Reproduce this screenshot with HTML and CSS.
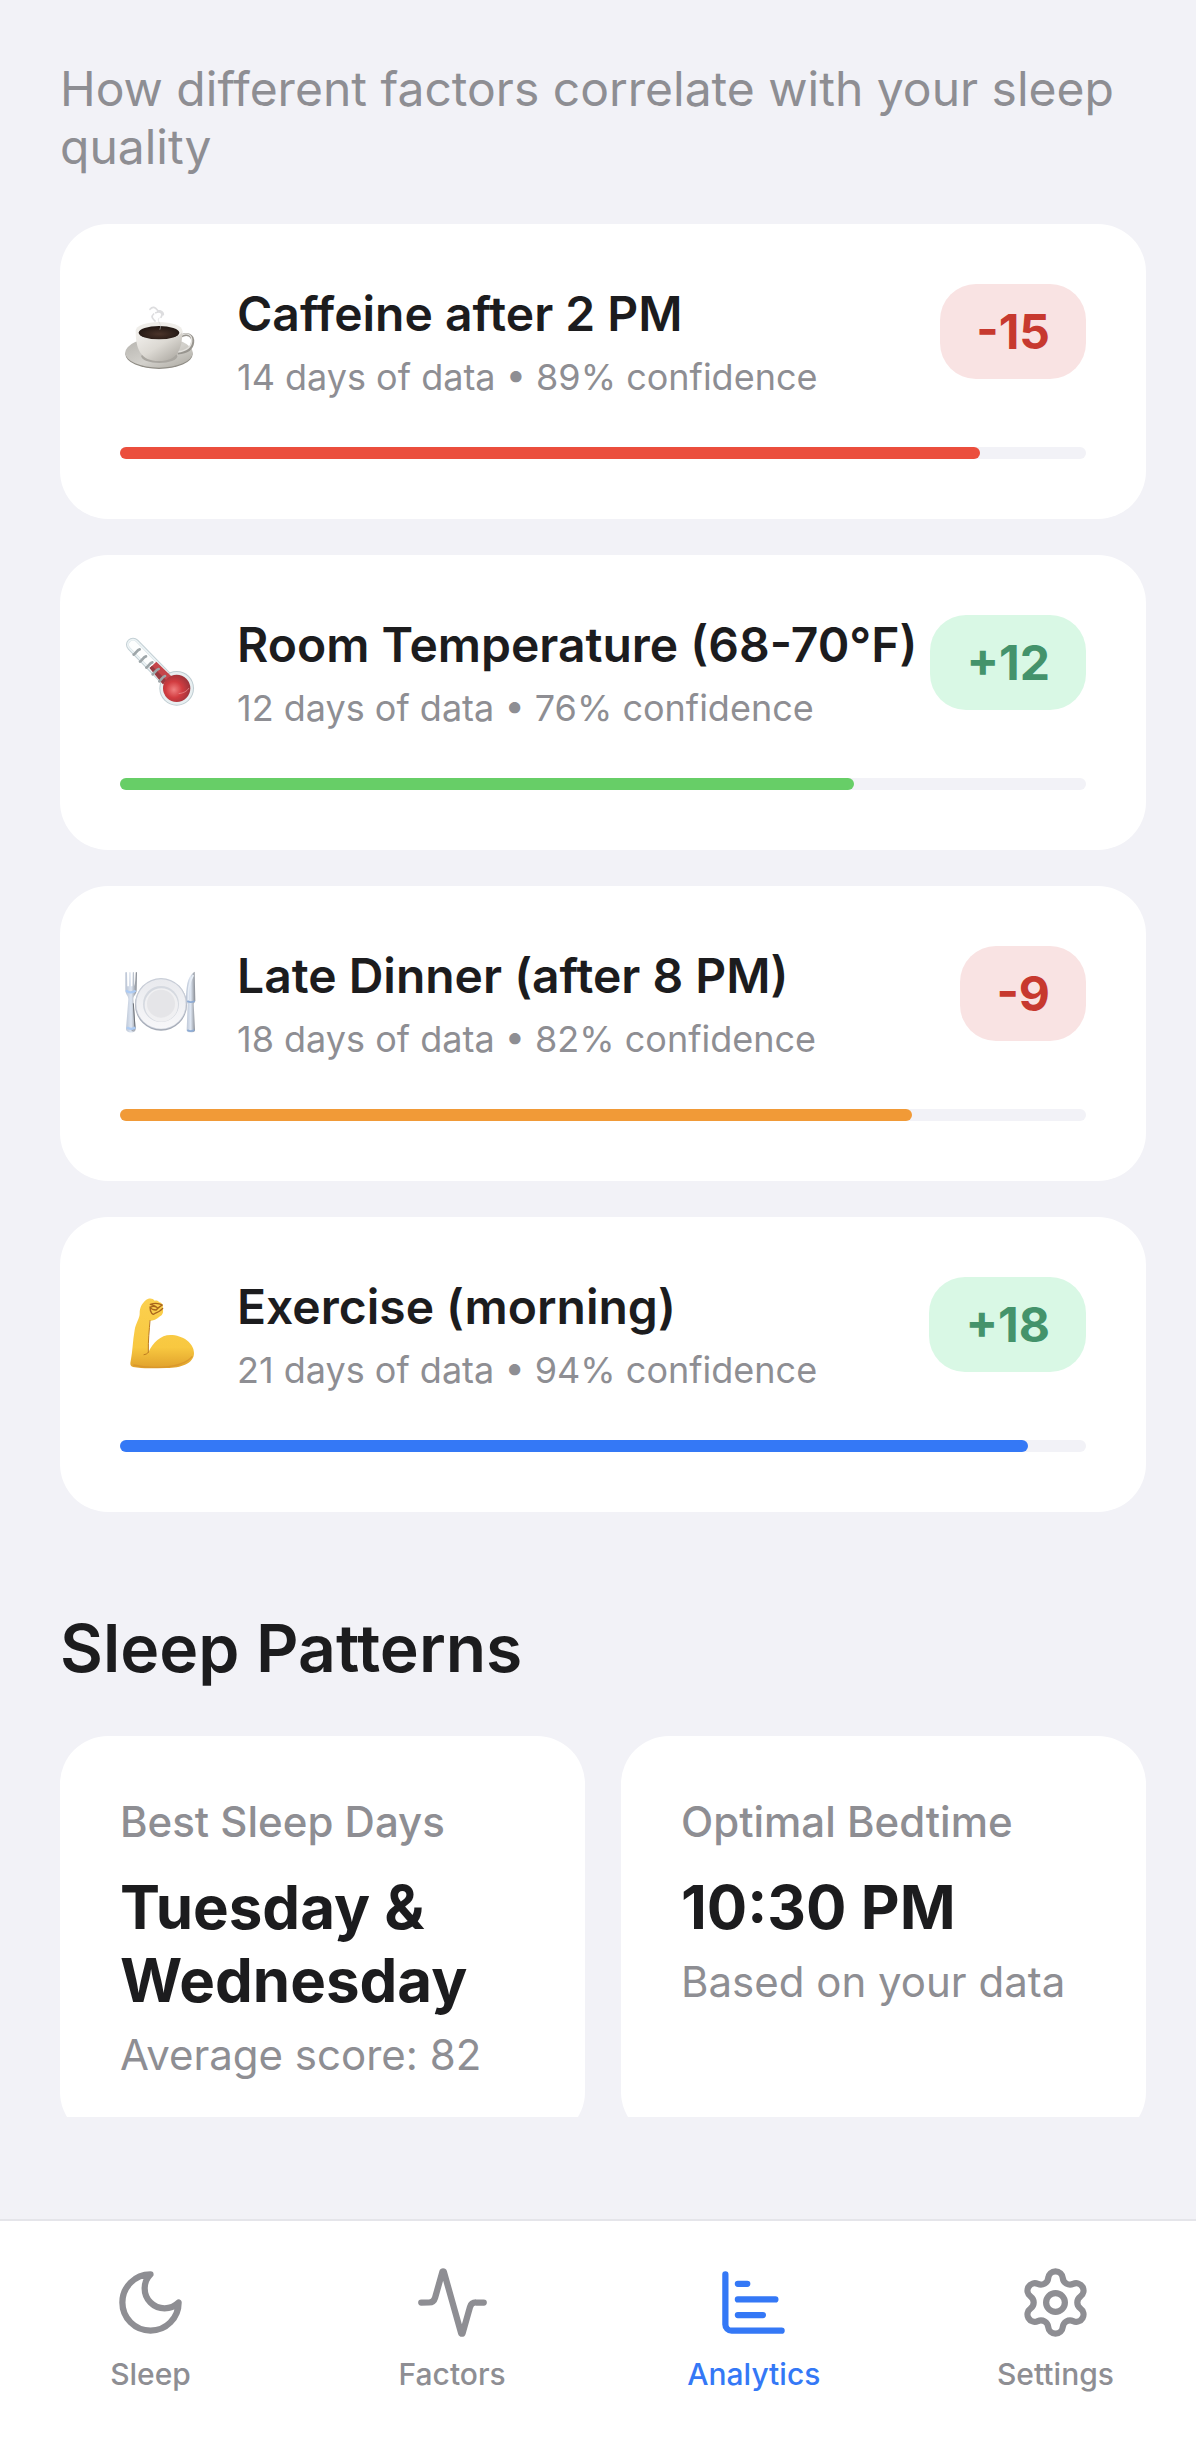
FILE: index.html
```html
<!DOCTYPE html>
<html lang="en">
<head>
  <meta charset="UTF-8" />
  <meta name="viewport" content="width=device-width, initial-scale=1, viewport-fit=cover" />
  <title>Sleep Analytics</title>
  <link rel="stylesheet" href="styles.css">
</head>
<body>

  <main class="content">
    <p class="intro">How different factors correlate with your sleep quality</p>

    <!-- Factor correlations -->
    <section class="factors">
      <article class="card">
        <div class="card-head">
          <svg class="emoji" viewBox="30 33 243 243" aria-hidden="true">
            <defs>
              <linearGradient id="cup" x1="0" y1="0" x2="1" y2="1">
                <stop offset="0" stop-color="#f4f2ef" />
                <stop offset="0.5" stop-color="#dcd9d3" />
                <stop offset="1" stop-color="#a5a19a" />
              </linearGradient>
              <linearGradient id="saucer" x1="0" y1="0" x2="1" y2="1">
                <stop offset="0" stop-color="#b5b3ae" />
                <stop offset="0.55" stop-color="#d3d1cc" />
                <stop offset="1" stop-color="#aaa79f" />
              </linearGradient>
              <radialGradient id="coffee" cx="0.5" cy="0.6" r="0.6">
                <stop offset="0" stop-color="#4a3329" />
                <stop offset="1" stop-color="#1f1511" />
              </radialGradient>
            </defs>
            <ellipse cx="147" cy="192" rx="101" ry="45" fill="#8f8c85" />
            <ellipse cx="147" cy="188" rx="101" ry="45" fill="url(#saucer)" />
            <ellipse cx="148" cy="199" rx="54" ry="20" fill="#a9a6a0" />
            <path d="M212 139c18-12 38-4 36 18-2 20-21 30-45 32" fill="none" stroke="#98958f" stroke-width="9" />
            <path d="M212 137c18-11 35-4 33 17-2 20-20 29-42 32" fill="none" stroke="#e2e0dc" stroke-width="4" />
            <path d="M77 122c0 54 14 91 70 91s70-37 70-91z" fill="url(#cup)" />
            <ellipse cx="147" cy="122" rx="70" ry="26" fill="#efede9" />
            <ellipse cx="147" cy="128" rx="61" ry="20" fill="url(#coffee)" />
            <g fill="none" stroke="#cfcfd1" stroke-linecap="round">
              <path d="M120 58c8-10 16-6 22 2M131 72c-10 9-2 14 4 21M137 68c15-5 24 1 16 14M143 62c10 0 18 4 17 12" stroke-width="5" opacity="0.7" />
              <path d="M147 84c-9 12 11 15 3 34" stroke-width="3" opacity="0.5" />
            </g>
          </svg>
          <div class="card-text">
            <h3>Caffeine after 2 PM</h3>
            <p>14 days of data • 89% confidence</p>
          </div>
          <span class="badge negative">-15</span>
        </div>
        <div class="bar"><div class="bar-fill red" style="width: 89%"></div></div>
      </article>

      <article class="card">
        <div class="card-head">
          <svg class="emoji" viewBox="30 36 243 243" aria-hidden="true">
            <defs>
              <radialGradient id="bulb" cx="0.4" cy="0.55" r="0.6">
                <stop offset="0" stop-color="#f07f7f" />
                <stop offset="0.5" stop-color="#d23c40" />
                <stop offset="1" stop-color="#9c343b" />
              </radialGradient>
            </defs>
            <g fill="none" stroke-linecap="round">
              <path d="M69 74L190 198" stroke="#c3d0d5" stroke-width="42" />
              <path d="M69 74L190 198" stroke="#eef4f6" stroke-width="36" />
              <path d="M69 74L190 198" stroke="#d3dfe3" stroke-width="27" />
              <path d="M69 74L190 198" stroke="#fdfefe" stroke-width="24" />
            </g>
            <circle cx="200" cy="205" r="52" fill="#bfcdd2" />
            <circle cx="200" cy="205" r="49" fill="#e8eff1" />
            <path d="M119 144L139 125L184 169L159 193z" fill="#c5454a" />
            <path d="M119 144L126 137L168 180L159 193z" fill="#973b41" />
            <circle cx="200" cy="205" r="41" fill="url(#bulb)" />
            <path d="M206 221c15-2 25-7 31-17" fill="none" stroke="#f2a0a0" stroke-width="3" opacity="0.6" />
            <path d="M71 104c5-3 11-15 18-16M90 125c5-3 11-15 18-16M109 143c5-3 11-15 18-16M128 163c5-3 11-15 18-16M148 184c5-3 9-14 17-16" fill="none" stroke="#9ea6a9" stroke-width="8" stroke-linecap="round" />
          </svg>
          <div class="card-text">
            <h3>Room Temperature (68-70°F)</h3>
            <p>12 days of data • 76% confidence</p>
          </div>
          <span class="badge positive">+12</span>
        </div>
        <div class="bar"><div class="bar-fill green" style="width: 76%"></div></div>
      </article>

      <article class="card">
        <div class="card-head">
          <svg class="emoji" viewBox="30 39 243 243" aria-hidden="true">
            <defs>
              <linearGradient id="steel" x1="0" y1="0" x2="1" y2="0">
                <stop offset="0" stop-color="#b9c3d3" />
                <stop offset="0.5" stop-color="#dfe7f3" />
                <stop offset="1" stop-color="#858990" />
              </linearGradient>
              <linearGradient id="plate" x1="0" y1="0" x2="0" y2="1">
                <stop offset="0" stop-color="#e9eaee" />
                <stop offset="1" stop-color="#f7f7f9" />
              </linearGradient>
            </defs>
            <circle cx="153" cy="164" r="78" fill="#a4aab6" />
            <circle cx="153" cy="161" r="77" fill="#c9ced8" />
            <circle cx="153" cy="162" r="74" fill="url(#plate)" />
            <circle cx="153" cy="162" r="54" fill="#d5d9e0" />
            <circle cx="154" cy="165" r="50" fill="#f0f0f2" />
            <circle cx="153" cy="161" r="42" fill="#e5e5e8" />
            <path d="M46 68c0-3 5-3 5 0l1 41h5l1-41c0-3 4-3 4 0l1 41h4l1-41c0-3 4-3 4 0l1 41c3-10 3-25 4-41 0-3 4-3 4 0l-1 50c0 17-10 18-10 30l7 88c1 15-29 15-29 0l7-88c0-12-9-13-9-30z" fill="url(#steel)" />
            <path d="M70 160l5 75c-3 6-10 6-12 3" fill="none" stroke="#6f737a" stroke-width="3" />
            <path d="M49 121c4 8 20 8 28 1M51 232c5 6 19 6 25 0" fill="none" stroke="#adcbf3" stroke-width="7" />
            <path d="M254 65c-19 13-25 31-26 91l5 5-3 80c0 9 25 9 25 0l-4-80 5-8z" fill="url(#steel)" />
            <path d="M250 75c-15 25-15 49-15 77" fill="none" stroke="#e8eef6" stroke-width="5" />
            <path d="M232 153c6 4 15 4 22 0M232 240c6 4 14 4 21 0" fill="none" stroke="#8dabd4" stroke-width="5" />
          </svg>
          <div class="card-text">
            <h3>Late Dinner (after 8 PM)</h3>
            <p>18 days of data • 82% confidence</p>
          </div>
          <span class="badge negative">-9</span>
        </div>
        <div class="bar"><div class="bar-fill orange" style="width: 82%"></div></div>
      </article>

      <article class="card">
        <div class="card-head">
          <svg class="emoji" viewBox="30 42 243 243" aria-hidden="true">
            <defs>
              <linearGradient id="skin" x1="0" y1="0" x2="0" y2="1">
                <stop offset="0" stop-color="#fbd04f" />
                <stop offset="0.7" stop-color="#f8c840" />
                <stop offset="1" stop-color="#e0a12c" />
              </linearGradient>
            </defs>
            <path d="M107 61c8-7 21-7 27 1 7-1 12 1 13 5 8 0 14 8 11 17 3 11 1 21-8 25-10 9-20 14-31 14-1 28-5 60-4 94 14-29 37-52 66-52 37 0 71 24 71 54 0 32-40 45-82 45-36 0-70 3-101-3-8-2-9-8-7-17 6-31 6-61 12-94 3-19 16-37 15-50 0-17 7-29 18-39z" fill="url(#skin)" />
            <path d="M120 122c-2 28-6 60-5 94M115 217c-3 5-8 6-13 7" fill="none" stroke="#bd7a20" stroke-width="3" stroke-linecap="round" />
            <path d="M121 73c12-4 28-2 36 2-7 5-14 8-18 15-8 0-16-3-18-8 6-4 14-3 20 0-4-5-13-7-20-9M120 81c0 16 8 27 15 19M158 85c-6 8-15 12-23 15" fill="none" stroke="#a9651c" stroke-width="4" stroke-linecap="round" stroke-linejoin="round" />
            <path d="M70 255c40 10 142 15 177-26" fill="none" stroke="#d5922b" stroke-width="4" opacity="0.7" />
          </svg>
          <div class="card-text">
            <h3>Exercise (morning)</h3>
            <p>21 days of data • 94% confidence</p>
          </div>
          <span class="badge positive">+18</span>
        </div>
        <div class="bar"><div class="bar-fill blue" style="width: 94%"></div></div>
      </article>
    </section>

    <!-- Sleep patterns -->
    <h2>Sleep Patterns</h2>
    <section class="patterns">
      <article class="card pattern">
        <h3>Best Sleep Days</h3>
        <strong>Tuesday &amp; Wednesday</strong>
        <p>Average score: 82</p>
      </article>
      <article class="card pattern">
        <h3>Optimal Bedtime</h3>
        <strong>10:30 PM</strong>
        <p>Based on your data</p>
      </article>
    </section>
  </main>

  <!-- Tab bar -->
  <nav class="tabs">
    <a href="#sleep" class="tab">
      <svg viewBox="0 0 24 24" aria-hidden="true">
        <path d="M12 3a6 6 0 0 0 9 9 9 9 0 1 1-9-9Z" />
      </svg>
      Sleep
    </a>
    <a href="#factors" class="tab">
      <svg viewBox="0 0 24 24" aria-hidden="true">
        <path d="M22 12h-2.48a2 2 0 0 0-1.93 1.46l-2.35 8.36a.25.25 0 0 1-.48 0L9.24 2.18a.25.25 0 0 0-.48 0l-2.35 8.36A2 2 0 0 1 4.49 12H2" />
      </svg>
      Factors
    </a>
    <a href="#analytics" class="tab active" aria-current="page">
      <svg viewBox="0 0 24 24" aria-hidden="true">
        <path d="M3 3v16a2 2 0 0 0 2 2h16M7 6h3M7 11h12M7 16h8" />
      </svg>
      Analytics
    </a>
    <a href="#settings" class="tab">
      <svg viewBox="0 0 24 24" aria-hidden="true">
        <path d="M9.671 4.136a2.34 2.34 0 0 1 4.659 0 2.34 2.34 0 0 0 3.319 1.915 2.34 2.34 0 0 1 2.33 4.033 2.34 2.34 0 0 0 0 3.831 2.34 2.34 0 0 1-2.33 4.033 2.34 2.34 0 0 0-3.319 1.915 2.34 2.34 0 0 1-4.659 0 2.34 2.34 0 0 0-3.32-1.915 2.34 2.34 0 0 1-2.33-4.033 2.34 2.34 0 0 0 0-3.831A2.34 2.34 0 0 1 6.35 6.051a2.34 2.34 0 0 0 3.319-1.915" />
        <circle cx="12" cy="12" r="3" />
      </svg>
      Settings
    </a>
  </nav>

</body>
</html>
```

FILE: styles.css
```css
/* Base */
*, *::before, *::after { box-sizing: border-box; }
body {
  margin: 0;
  height: 100vh;
  display: flex;
  flex-direction: column;
  background: #f2f2f7;
  color: #1c1c1e;
  font-family: Inter, "Liberation Sans", sans-serif;
}
h2, h3, p { margin: 0; }

/* Content area, cut off above the tab bar */
.content {
  flex: 1;
  min-height: 0;
  overflow: hidden;
  padding: 60px 50px 0 60px;
  margin-bottom: 102px;
}
.intro {
  margin-bottom: 48px;
  font-size: 48px;
  line-height: 58px;
  color: #8e8e93;
}

/* Cards */
.card {
  background: #fff;
  border-radius: 48px;
  padding: 60px;
}
.factors {
  display: flex;
  flex-direction: column;
  gap: 36px;
}
.card-head {
  display: flex;
  align-items: flex-start;
  margin-bottom: 48px;
}
.emoji {
  flex: none;
  align-self: center;
  width: 81px;
  height: 81px;
  margin-right: 36px;
}
.card-text {
  flex: 1;
  min-width: 0;
  white-space: nowrap;
}
.card-text h3 {
  margin-bottom: 12px;
  font-size: 48px;
  font-weight: 600;
  line-height: 59px;
}
.card-text p {
  font-size: 36px;
  line-height: 44px;
  color: #8e8e93;
}
.badge {
  padding: 18px 36px;
  border-radius: 36px;
  font-size: 48px;
  font-weight: 700;
  line-height: 59px;
}
.badge.negative { background: #f9e3e3; color: #c7392f; }
.badge.positive { background: #d9f8e5; color: #44936b; }

/* Confidence bar */
.bar {
  height: 12px;
  border-radius: 6px;
  background: #f2f2f7;
}
.bar-fill {
  height: 100%;
  border-radius: 6px;
}
.red { background: #eb4e3d; }
.green { background: #67ce67; }
.orange { background: #f19a37; }
.blue { background: #3478f6; }

/* Sleep patterns */
h2 {
  margin: 96px 0 48px;
  font-size: 66px;
  font-weight: 600;
  line-height: 80px;
}
.patterns {
  display: grid;
  grid-template-columns: 1fr 1fr;
  gap: 36px;
}
.pattern h3,
.pattern p {
  font-size: 42px;
  line-height: 51px;
  color: #8e8e93;
}
.pattern h3 { font-weight: 500; }
.pattern strong {
  display: block;
  margin: 24px 0 12px;
  font-size: 60px;
  font-weight: 700;
  line-height: 73px;
}

/* Tab bar */
.tabs {
  display: flex;
  justify-content: space-between;
  height: 220px;
  padding: 44px 50px 0 60px;
  border-top: 2px solid #e5e5ea;
  background: #fff;
}
.tab {
  display: flex;
  flex-direction: column;
  align-items: center;
  gap: 16px;
  width: 181px;
  color: #8e8e93;
  font-size: 30px;
  font-weight: 500;
  line-height: 36px;
  text-decoration: none;
}
.tab.active { color: #3478f6; }
.tab svg {
  width: 75px;
  height: 75px;
  fill: none;
  stroke: currentColor;
  stroke-width: 2;
  stroke-linecap: round;
  stroke-linejoin: round;
}
```
